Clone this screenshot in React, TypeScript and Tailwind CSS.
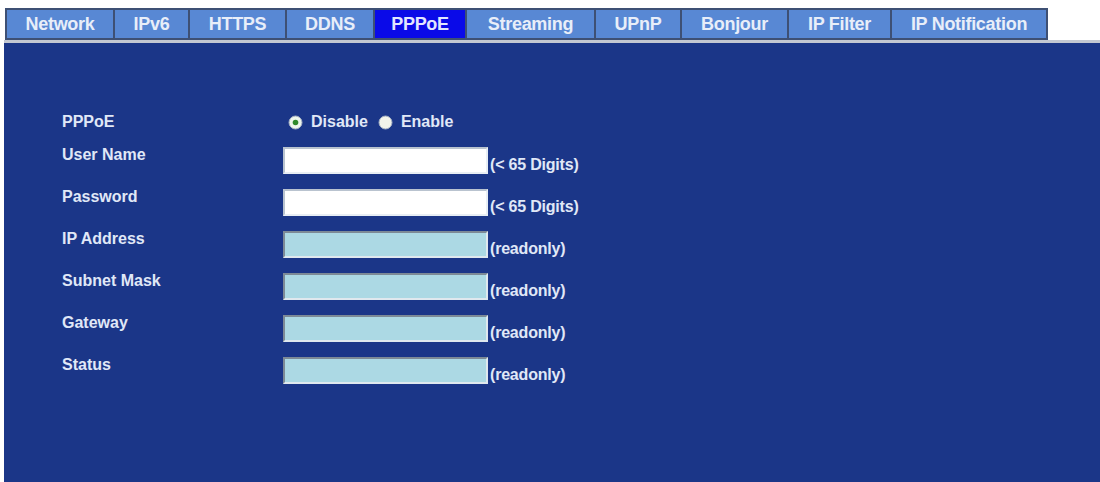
import React from "react";

const tabs = [
  { label: "Network", w: "w-[108px]" },
  { label: "IPv6", w: "w-[75px]" },
  { label: "HTTPS", w: "w-[97px]" },
  { label: "DDNS", w: "w-[88px]" },
  { label: "PPPoE", w: "w-[92px]", active: true },
  { label: "Streaming", w: "w-[129px]" },
  { label: "UPnP", w: "w-[86px]" },
  { label: "Bonjour", w: "w-[107px]" },
  { label: "IP Filter", w: "w-[103px]" },
  { label: "IP Notification", w: "w-[158px]" },
];

const fields = [
  { label: "User Name", readonly: false, hint: "(< 65 Digits)" },
  { label: "Password", readonly: false, hint: "(< 65 Digits)" },
  { label: "IP Address", readonly: true, hint: "(readonly)" },
  { label: "Subnet Mask", readonly: true, hint: "(readonly)" },
  { label: "Gateway", readonly: true, hint: "(readonly)" },
  { label: "Status", readonly: true, hint: "(readonly)" },
];

const Radio = ({ checked }: { checked: boolean }) => (
  <svg width="15" height="15" viewBox="0 0 15 15" className="shrink-0">
    <circle cx="7.5" cy="7.5" r="6.5" fill={checked ? "#eef6ec" : "#f2f3ea"} stroke="#a7b2c4" strokeWidth="1" />
    {checked && <circle cx="7.5" cy="7.5" r="2.8" fill="#2f8a2a" />}
  </svg>
);

export default function App() {
  return (
    <div
      className="w-[1100px] h-[482px] bg-white pt-2 flex flex-col overflow-hidden"
      style={{ fontFamily: '"Liberation Sans", Arial, sans-serif' }}
    >
      <div className="flex pl-[5px] h-[32px]">
        {tabs.map((t) => (
          <div
            key={t.label}
            className={`${t.w} h-full flex items-center justify-center border-y-2 border-l-2 last:border-r-2 border-[#3e5074] text-[18px] font-bold tracking-[-0.3px] ${
              t.active ? "bg-[#0a0ae8] text-[#e2e6ff]" : "bg-[#5888d4] text-[#e8eef9]"
            }`}
          >
            {t.label}
          </div>
        ))}
      </div>
      <div className="h-[3px] ml-[4px] bg-[#c3c8d2]" />
      <div className="flex-1 ml-[4px] bg-[#1b3688] pt-[70px] pl-[58px] text-[#e0e8f7] text-[16px] font-bold">
        <div className="flex items-center h-[18px] mb-[16px]">
          <span className="w-[221px] leading-[18px]">PPPoE</span>
          <div className="flex items-center ml-[5px]">
            <Radio checked />
            <span className="ml-[8px] leading-[18px]">Disable</span>
            <span className="ml-[10px]">
              <Radio checked={false} />
            </span>
            <span className="ml-[8px] leading-[18px]">Enable</span>
          </div>
        </div>
        <div className="flex flex-col gap-[15px]">
          {fields.map((f) => (
            <div key={f.label} className="flex items-start">
              <span className="w-[221px] leading-[18px] -mt-[1px]">{f.label}</span>
              <div className="flex items-end">
                <div
                  className={`w-[205px] h-[27px] border-2 ${
                    f.readonly
                      ? "bg-[#acd9e4] border-t-[#7d8a96] border-l-[#7d8a96] border-b-[#dfe8ee] border-r-[#dfe8ee]"
                      : "bg-white border-t-[#b9c3cf] border-l-[#b9c3cf] border-b-[#e8eef4] border-r-[#e8eef4]"
                  }`}
                />
                <span className="ml-[2px] leading-[18px] tracking-[-0.2px]">{f.hint}</span>
              </div>
            </div>
          ))}
        </div>
      </div>
    </div>
  );
}
